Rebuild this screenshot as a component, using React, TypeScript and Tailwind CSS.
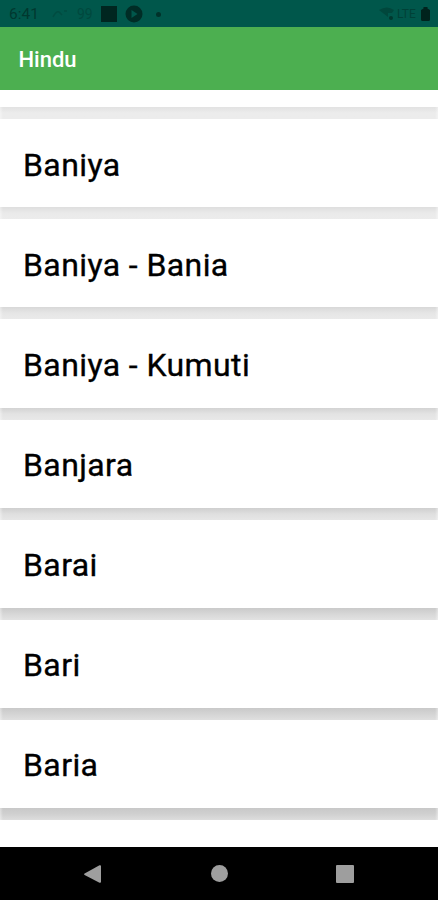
import React from "react";

// The shadow below each card gets deeper further down the list
const items = [
  { name: "Baniya", gap: "from-[#dedede] via-[#eaeaea] to-[#ececec]" },
  { name: "Baniya - Bania", gap: "from-[#d8d8d8] via-[#e6e6e6] to-[#eaeaea]" },
  { name: "Baniya - Kumuti", gap: "from-[#d3d3d3] via-[#e3e3e3] to-[#e8e8e8]" },
  { name: "Banjara", gap: "from-[#cfcfcf] via-[#dfdfdf] to-[#e6e6e6]" },
  { name: "Barai", gap: "from-[#cacaca] via-[#d7d7d7] to-[#e2e2e2]" },
  { name: "Bari", gap: "from-[#c9c9c9] via-[#d4d4d4] to-[#dfdfdf]" },
  { name: "Baria", gap: "from-[#c8c8c8] via-[#d0d0d0] to-[#dddddd]" },
];

const StatusBar = () => (
  <div className="flex h-[27px] shrink-0 items-center justify-between bg-[#00574b] pl-[9px] pr-[8px] pt-px text-[#00382f]">
    <div className="flex items-center">
      <span className="w-[42px] pt-[2px] text-[15.5px] leading-none">6:41</span>
      <svg className="h-4 w-[18px] opacity-35" viewBox="0 0 18 16" fill="none" stroke="currentColor" strokeWidth="1.5">
        <path d="M2 11Q5 5 8 6l3 3M13 5h3" />
      </svg>
      <span className="ml-[8px] w-[24px] text-[14px] leading-none opacity-45">99</span>
      <span className="h-4 w-4 bg-[#002620]" />
      <svg className="ml-[8px] h-[18px] w-[18px]" viewBox="0 0 18 18">
        <circle cx="9" cy="9" r="8.5" fill="#002d26" />
        <path d="M6.5 5l6 4-6 4z" fill="#00574b" />
      </svg>
      <span className="ml-[13px] h-[5px] w-[5px] rounded-full bg-[#00322a]" />
    </div>
    <div className="flex items-center">
      <svg className="h-[14px] w-[16px]" viewBox="0 0 16 14">
        <path d="M0 3Q8-2 15 3L13 6H9v4z" fill="#00473c" />
        <circle cx="12" cy="11" r="2" fill="#00382f" />
      </svg>
      <span className="ml-[2px] w-[20px] text-[12px] leading-none opacity-70">LTE</span>
      <svg className="ml-[4px] h-[14px] w-[9px]" viewBox="0 0 9 14">
        <path d="M2.5 0h4v1.5L9 3v9.5Q9 14 7.5 14h-6Q0 14 0 12.5V3l2.5-1.5z" fill="#00231d" />
      </svg>
    </div>
  </div>
);

const Gap = ({ shade }: { shade: string }) => (
  <div className={`flex h-[12px] justify-between bg-gradient-to-b ${shade}`}>
    <span className="w-[3px] bg-gradient-to-r from-white/40 to-transparent" />
    <span className="w-[3px] bg-gradient-to-l from-white/40 to-transparent" />
  </div>
);

const NavBar = () => (
  <div className="flex h-[53px] shrink-0 items-center bg-black pl-[84px] text-[#9e9e9e]">
    <svg className="h-[18px] w-[17px]" viewBox="0 0 17 18" fill="currentColor">
      <path d="M15.5 0.3Q17 0 17 1v16q0 1-1.5 0.7L0.6 10q-1-0.8 0-1.5z" />
    </svg>
    <span className="ml-[110px] h-[17px] w-[17px] rounded-full bg-[#9e9e9e]" />
    <span className="ml-[108px] h-[18px] w-[18px] rounded-[1px] bg-[#9e9e9e]" />
  </div>
);

const App = () => {
  return (
    <div className="flex h-[900px] w-[438px] flex-col overflow-hidden bg-white font-['Roboto',sans-serif]">
      <StatusBar />

      <header className="flex h-[63px] shrink-0 items-center bg-[#4caf50] pl-[18.5px] pt-[2px]">
        <h1 className="text-[22px] font-medium leading-none text-white">Hindu</h1>
      </header>

      <main className="min-h-0 flex-1 overflow-hidden">
        {/* End of the card scrolled under the header */}
        <div className="h-[17.3px] bg-white" />
        <Gap shade="from-[#e2e2e2] via-[#ececec] to-[#ececec]" />
        {items.map((item) => (
          <div key={item.name}>
            <div className="flex h-[88.1px] items-center rounded-[2px] bg-white pl-[23px] pt-[2.4px]">
              <p className="whitespace-nowrap text-[32px] leading-none tracking-[0.4px] text-black [-webkit-text-stroke:0.35px_black]">
                {item.name}
              </p>
            </div>
            <Gap shade={item.gap} />
          </div>
        ))}
      </main>

      <NavBar />
    </div>
  );
};

export default App;
